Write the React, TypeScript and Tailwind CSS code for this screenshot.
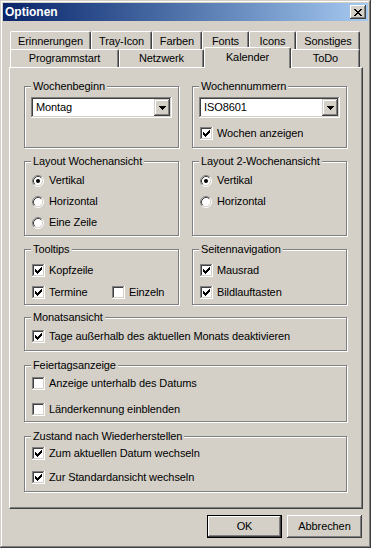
import type { ReactNode } from "react";

const raised =
	"shadow-[inset_-1px_-1px_#404040,inset_1px_1px_#fff,inset_-2px_-2px_#808080,inset_2px_2px_#d4d0c8]";
const sunken =
	"shadow-[inset_-1px_-1px_#fff,inset_1px_1px_#808080,inset_-2px_-2px_#d4d0c8,inset_2px_2px_#404040]";

function CheckBox({ checked }: { checked?: boolean }) {
	return (
		<span
			className={`flex h-[13px] w-[13px] shrink-0 items-center justify-center bg-white ${sunken}`}
		>
			{checked && (
				<svg width="7" height="7" viewBox="0 0 7 7" shapeRendering="crispEdges">
					<path d="M0 2h1v3H0zM1 3h1v3H1zM2 4h1v3H2zM3 3h1v3H3zM4 2h1v3H4zM5 1h1v3H5zM6 0h1v3H6z" />
				</svg>
			)}
		</span>
	);
}

function Check({
	label,
	checked,
	className = "",
}: {
	label: string;
	checked?: boolean;
	className?: string;
}) {
	return (
		<div className={`flex h-[13px] items-center gap-[4px] ${className}`}>
			<CheckBox checked={checked} />
			<span className="whitespace-nowrap">{label}</span>
		</div>
	);
}

function Radio({
	label,
	checked,
	className = "",
}: {
	label: string;
	checked?: boolean;
	className?: string;
}) {
	return (
		<div className={`flex h-[13px] items-center gap-[5px] pl-[7px] ${className}`}>
			<svg width="12" height="12" viewBox="0 0 12 12" className="shrink-0">
				<circle cx="6" cy="6" r="5" fill="#fff" />
				<path d="M2.11 9.89A5.5 5.5 0 0 1 9.89 2.11" stroke="#808080" fill="none" />
				<path d="M9.89 2.11A5.5 5.5 0 0 1 2.11 9.89" stroke="#fff" fill="none" />
				<path d="M2.82 9.18A4.5 4.5 0 0 1 9.18 2.82" stroke="#404040" fill="none" />
				<path d="M9.18 2.82A4.5 4.5 0 0 1 2.82 9.18" stroke="#d4d0c8" fill="none" />
				{checked && <circle cx="6" cy="6" r="2" fill="#000" />}
			</svg>
			<span className="whitespace-nowrap">{label}</span>
		</div>
	);
}

function Group({
	title,
	className,
	children,
}: {
	title: string;
	className: string;
	children: ReactNode;
}) {
	return (
		<div
			className={`border border-[#808080] shadow-[1px_1px_#fff,inset_1px_1px_#fff] ${className}`}
		>
			<div className="-mt-[7px] ml-[6px] h-[13px] w-fit bg-[#d4d0c8] px-[2px] whitespace-nowrap">
				{title}
			</div>
			{children}
		</div>
	);
}

function Combo({ value }: { value: string }) {
	return (
		<div
			className={`ml-[6px] mt-[4px] flex h-[21px] w-[141px] items-center bg-white p-[2px] ${sunken}`}
		>
			<span className="flex-1 pl-[3px]">{value}</span>
			<div className="flex h-[17px] w-[16px] items-center justify-center bg-[#d4d0c8] shadow-[inset_-1px_-1px_#404040,inset_1px_1px_#d4d0c8,inset_-2px_-2px_#808080,inset_2px_2px_#fff]">
				<svg width="7" height="4" viewBox="0 0 7 4" shapeRendering="crispEdges">
					<path d="M0 0h7v1H0zM1 1h5v1H1zM2 2h3v1H2zM3 3h1v1H3z" />
				</svg>
			</div>
		</div>
	);
}

function Tab({ label, className }: { label: string; className: string }) {
	return (
		<div
			className={`flex items-center justify-center rounded-t-[2px] border-l border-t border-r border-white border-r-[#404040] bg-[#d4d0c8] shadow-[inset_-1px_0_#808080] whitespace-nowrap ${className}`}
		>
			{label}
		</div>
	);
}

export default function App() {
	return (
		<div className="h-[548px] w-[371px] bg-[#d4d0c8] p-[3px] font-['Liberation_Sans',Arial,sans-serif] text-[11px] leading-[13px] tracking-[-0.1px] text-black shadow-[inset_-1px_-1px_#404040,inset_1px_1px_#d4d0c8,inset_-2px_-2px_#808080,inset_2px_2px_#fff]">
			<div className="flex h-[18px] items-center bg-linear-to-r from-[#0a246a] to-[#a6caf0] px-[2px]">
				<span className="flex-1 text-[12px] font-bold tracking-normal text-white">Optionen</span>
				<div className={`flex h-[14px] w-[16px] items-center justify-center bg-[#d4d0c8] ${raised}`}>
					<svg width="8" height="7" viewBox="0 0 8 7" shapeRendering="crispEdges">
						<path d="M0 0h2v1H0zM6 0h2v1H6zM1 1h2v1H1zM5 1h2v1H5zM2 2h4v1H2zM3 3h2v1H3zM2 4h4v1H2zM1 5h2v1H1zM5 5h2v1H5zM0 6h2v1H0zM6 6h2v1H6z" />
					</svg>
				</div>
			</div>

			<div className="ml-[6px] mt-[10px] w-[354px]">
				<div className="ml-[1px] flex h-[18px]">
					<Tab label="Erinnerungen" className="h-[20px] w-[81px]" />
					<Tab label="Tray-Icon" className="h-[20px] w-[61px]" />
					<Tab label="Farben" className="h-[20px] w-[50px]" />
					<Tab label="Fonts" className="h-[20px] w-[47px]" />
					<Tab label="Icons" className="h-[20px] w-[47px]" />
					<Tab label="Sonstiges" className="h-[20px] w-[64px]" />
				</div>
				<div className="relative ml-[1px] flex h-[18px] items-end">
					<Tab label="Programmstart" className="h-[18px] w-[109px]" />
					<Tab label="Netzwerk" className="h-[18px] w-[85px]" />
					<Tab label="Kalender" className="relative z-10 -mb-px h-[21px] w-[87px] pb-[2px]" />
					<Tab label="ToDo" className="h-[18px] w-[69px]" />
				</div>

				<div className="h-[442px] border border-white border-r-[#404040] border-b-[#404040] pl-[14px] pt-[18px] shadow-[inset_-1px_-1px_#808080]">
					<div className="flex gap-[13px]">
						<Group title="Wochenbeginn" className="h-[62px] w-[155px]">
							<Combo value="Montag" />
						</Group>
						<Group title="Wochennummern" className="h-[62px] w-[155px]">
							<Combo value="ISO8601" />
							<Check label="Wochen anzeigen" checked className="ml-[7px] mt-[9px]" />
						</Group>
					</div>

					<div className="mt-[13px] flex gap-[13px]">
						<Group title="Layout Wochenansicht" className="h-[75px] w-[155px]">
							<Radio label="Vertikal" checked className="mt-[6px]" />
							<Radio label="Horizontal" className="mt-[8px]" />
							<Radio label="Eine Zeile" className="mt-[8px]" />
						</Group>
						<Group title="Layout 2-Wochenansicht" className="h-[75px] w-[155px]">
							<Radio label="Vertikal" checked className="mt-[6px]" />
							<Radio label="Horizontal" className="mt-[8px]" />
						</Group>
					</div>

					<div className="mt-[13px] flex gap-[13px]">
						<Group title="Tooltips" className="h-[56px] w-[155px]">
							<Check label="Kopfzeile" checked className="ml-[7px] mt-[8px]" />
							<div className="ml-[7px] mt-[9px] flex">
								<Check label="Termine" checked className="w-[80px]" />
								<Check label="Einzeln" />
							</div>
						</Group>
						<Group title="Seitennavigation" className="h-[56px] w-[155px]">
							<Check label="Mausrad" checked className="ml-[7px] mt-[8px]" />
							<Check label="Bildlauftasten" checked className="ml-[7px] mt-[9px]" />
						</Group>
					</div>

					<Group title="Monatsansicht" className="mt-[12px] h-[34px] w-[323px]">
						<Check
							label="Tage außerhalb des aktuellen Monats deaktivieren"
							checked
							className="ml-[7px] mt-[6px]"
						/>
					</Group>

					<Group title="Feiertagsanzeige" className="mt-[14px] h-[57px] w-[323px]">
						<Check label="Anzeige unterhalb des Datums" className="ml-[7px] mt-[5px]" />
						<Check label="Länderkennung einblenden" className="ml-[7px] mt-[13px]" />
					</Group>

					<Group title="Zustand nach Wiederherstellen" className="mt-[14px] h-[56px] w-[323px]">
						<Check label="Zum aktuellen Datum wechseln" checked className="ml-[7px] mt-[4px]" />
						<Check label="Zur Standardansicht wechseln" checked className="ml-[7px] mt-[11px]" />
					</Group>
				</div>

				<div className="mt-[6px] flex justify-end gap-[5px] pr-[1px]">
					<button
						type="button"
						className={`flex h-[23px] w-[75px] items-center justify-center border border-black bg-[#d4d0c8] ${raised}`}
					>
						OK
					</button>
					<button
						type="button"
						className={`flex h-[23px] w-[75px] items-center justify-center bg-[#d4d0c8] ${raised}`}
					>
						Abbrechen
					</button>
				</div>
			</div>
		</div>
	);
}
